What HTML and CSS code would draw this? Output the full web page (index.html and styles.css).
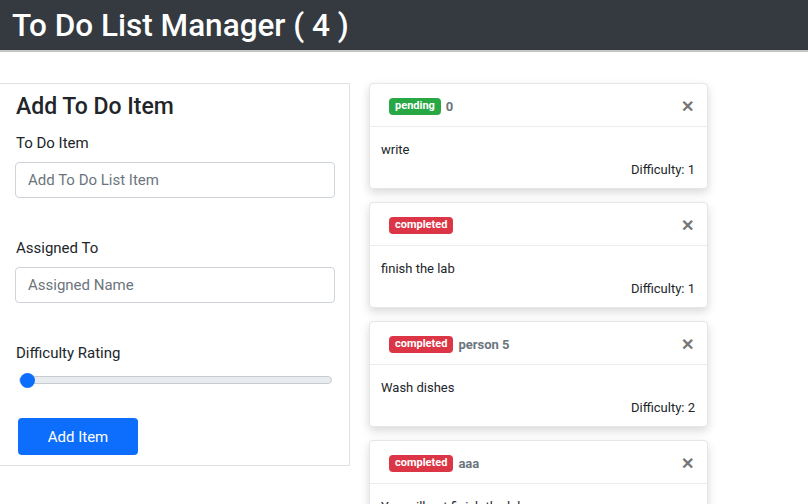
FILE: index.html
```html
<!DOCTYPE html>
<html>
<head>
<meta charset="utf-8">
<link rel="stylesheet" href="styles.css">
</head>
<body>
<header class="top">
  <h1 class="title">To Do List Manager ( 4 )</h1>
</header>
<main class="main">
  <form class="form">
    <h2 class="form-title">Add To Do Item</h2>
    <label class="field">
      <span class="label">To Do Item</span>
      <input class="input" type="text" placeholder="Add To Do List Item">
    </label>
    <label class="field">
      <span class="label">Assigned To</span>
      <input class="input" type="text" placeholder="Assigned Name">
    </label>
    <label class="field field-range">
      <span class="label">Difficulty Rating</span>
      <input class="range" type="range" min="1" max="5" value="1">
    </label>
    <button class="btn" type="button">Add Item</button>
  </form>
  <section class="list">
    <div class="card">
      <div class="card-head">
        <span class="badge pending">pending</span><span class="who">0</span>
        <span class="close">&#x2715;</span>
      </div>
      <div class="card-body">
        <p class="text">write</p>
        <p class="diff">Difficulty: 1</p>
      </div>
    </div>
    <div class="card">
      <div class="card-head">
        <span class="badge done">completed</span><span class="who"></span>
        <span class="close">&#x2715;</span>
      </div>
      <div class="card-body">
        <p class="text">finish the lab</p>
        <p class="diff">Difficulty: 1</p>
      </div>
    </div>
    <div class="card">
      <div class="card-head">
        <span class="badge done">completed</span><span class="who">person 5</span>
        <span class="close">&#x2715;</span>
      </div>
      <div class="card-body">
        <p class="text">Wash dishes</p>
        <p class="diff">Difficulty: 2</p>
      </div>
    </div>
    <div class="card">
      <div class="card-head">
        <span class="badge done">completed</span><span class="who">aaa</span>
        <span class="close">&#x2715;</span>
      </div>
      <div class="card-body">
        <p class="text">You will not finish the lab</p>
        <p class="diff">Difficulty: 5</p>
      </div>
    </div>
  </section>
</main>
</body>
</html>
```
FILE: styles.css
```css
* { box-sizing: border-box; }
html, body { margin: 0; padding: 0; }
body {
  font-family: "Segoe UI", Roboto, "Noto Sans", "Liberation Sans", sans-serif;
  color: #212529;
  background: #fff;
  width: 808px;
  height: 504px;
  overflow: hidden;
}
.top {
  background: #343a40;
  height: 52px;
  border-bottom: 2px solid #c3c5c7;
  padding: 0 12px;
  display: flex;
  align-items: center;
}
.title {
  margin: 0;
  color: #fff;
  font-size: 31.5px;
  font-weight: 500;
  line-height: 1;
  padding-top: 2px;
}
.main {
  display: flex;
  align-items: flex-start;
  gap: 19px;
  padding-top: 31px;
}
.form {
  width: 350px;
  border: 1px solid #dfe1e3;
  border-left: none;
  padding: 8px 14px 10px 15px;
  display: flex;
  flex-direction: column;
}
.form-title {
  margin: 1px 0 12px 1px;
  font-size: 23px;
  font-weight: 500;
  line-height: 28px;
}
.field {
  display: flex;
  flex-direction: column;
  margin-bottom: 40px;
}
.label {
  font-size: 15px;
  line-height: 20px;
  margin: 0 0 9px 1px;
  color: #212529;
}
.input {
  height: 36px;
  border: 1px solid #ced4da;
  border-radius: 4px;
  padding: 0 12px;
  font-family: inherit;
  font-size: 15px;
  color: #212529;
}
.input::placeholder { color: #6c757d; }
.range {
  -webkit-appearance: none;
  appearance: none;
  margin: 4px 3px 0 4px;
  height: 8px;
  background: #e9ecef;
  border: 1px solid #c9cdd1;
  border-radius: 4px;
  width: 313px;
}
.range::-webkit-slider-thumb {
  -webkit-appearance: none;
  width: 15px;
  height: 15px;
  border-radius: 50%;
  background: #0d6efd;
  border: none;
}
.field-range { margin-bottom: 34px; }
.btn {
  align-self: flex-start;
  margin-left: 3px;
  width: 120px;
  height: 37px;
  background: #0d6efd;
  color: #fff;
  border: none;
  border-radius: 4px;
  font-family: inherit;
  font-size: 15px;
}
.list {
  width: 339px;
  display: flex;
  flex-direction: column;
  gap: 13px;
}
.card {
  background: #fff;
  border: 1px solid #e6e6e6;
  border-radius: 4px;
  box-shadow: 0 4px 10px rgba(0,0,0,0.15);
  height: 106px;
}
.card-head {
  height: 43px;
  border-bottom: 1px solid #ececec;
  display: flex;
  align-items: center;
  padding: 3px 13px 0 19px;
}
.badge {
  font-size: 11px;
  font-weight: 700;
  color: #fff;
  border-radius: 4px;
  padding: 2px 6px 3px;
  line-height: 12px;
}
.pending { background: #28a745; }
.done { background: #dc3545; }
.who {
  margin-left: 5px;
  font-size: 13px;
  font-weight: 700;
  color: #6c757d;
}
.close {
  margin-left: auto;
  font-size: 16px;
  font-weight: 700;
  color: #777;
}
.card-body {
  padding: 14px 12px 0 11px;
}
.text {
  margin: 0;
  font-size: 13px;
  line-height: 18px;
  color: #212529;
}
.diff {
  margin: 2px 0 0;
  text-align: right;
  font-size: 13px;
  line-height: 18px;
  color: #212529;
}
```
